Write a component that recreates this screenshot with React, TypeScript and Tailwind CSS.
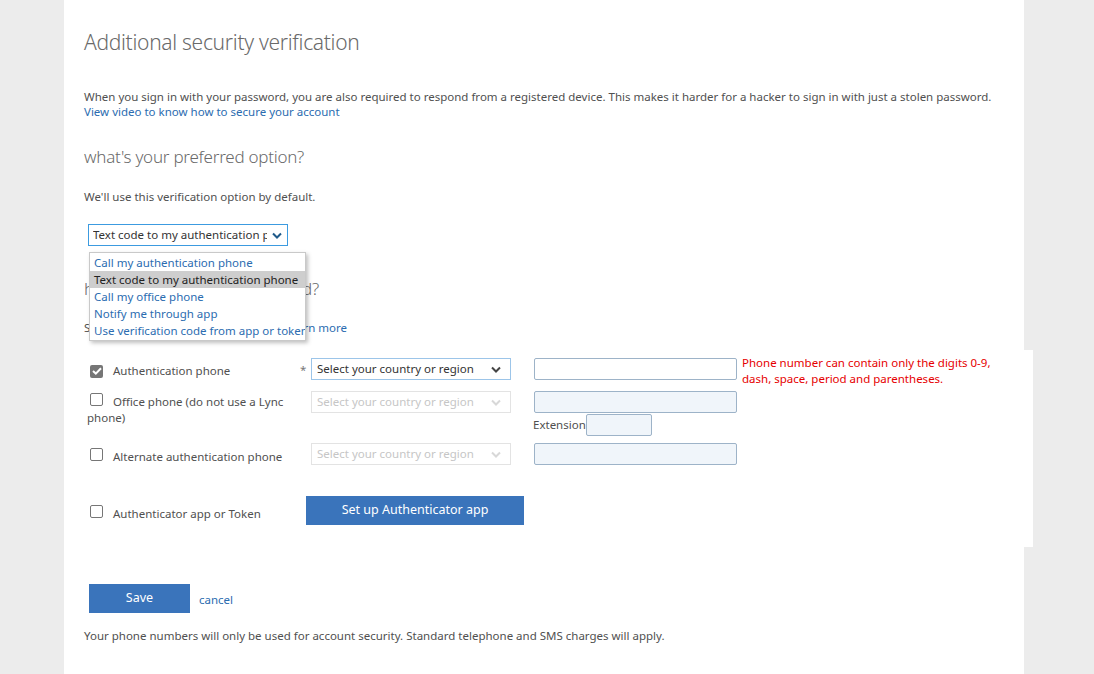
import React from 'react';

const Chevron = ({ className }: { className: string }) => (
  <svg width="10" height="7" viewBox="0 0 10 7" className={className}>
    <polyline points="1,1.5 5,5.5 9,1.5" fill="none" stroke="currentColor" strokeWidth="2" />
  </svg>
);

function CheckBox({ checked }: { checked?: boolean }) {
  if (checked) {
    return (
      <span className="inline-flex h-[13px] w-[13px] items-center justify-center rounded-[2px] bg-[#767676] align-[0px]">
        <svg width="10" height="8" viewBox="0 0 10 8">
          <polyline points="1,4 3.8,6.6 9,1.2" fill="none" stroke="white" strokeWidth="2" />
        </svg>
      </span>
    );
  }
  return (
    <span className="inline-block h-[13px] w-[13px] rounded-[2px] border border-[#767676] bg-white align-[0px]" />
  );
}

function CountrySelect({ disabled }: { disabled?: boolean }) {
  return (
    <div
      className={`flex h-[22px] w-[200px] items-center justify-between border pr-[9px] pl-[5px] ${
        disabled ? 'border-[#e3e3e3] text-[#c6c6c6]' : 'border-[#9cc5e9] text-[#333]'
      }`}
    >
      <span>Select your country or region</span>
      <Chevron className={disabled ? 'text-[#d8d8d8]' : 'text-[#444]'} />
    </div>
  );
}

function PhoneInput({ disabled, width = 'w-[203px]' }: { disabled?: boolean; width?: string }) {
  return (
    <div
      className={`h-[22px] ${width} rounded-[2px] border border-[#9db3c8] ${
        disabled ? 'bg-[#f0f5fa]' : 'bg-white'
      }`}
    />
  );
}

const options = [
  'Call my authentication phone',
  'Text code to my authentication phone',
  'Call my office phone',
  'Notify me through app',
  'Use verification code from app or token',
];

export default function App() {
  return (
    <div className="min-h-screen bg-[#ececec] font-['Noto_Sans',sans-serif] text-[11.5px] text-[#505050]">
      <div className="relative ml-[64px] min-h-[674px] w-[960px] bg-white px-5 pt-[27px]">
        <h1 className="text-[21px] leading-[30px] font-light tracking-[-0.3px] text-[#6a6a6a]">
          Additional security verification
        </h1>

        <p className="mt-[32px] leading-[15px]">
          When you sign in with your password, you are also required to respond from a registered device. This
          makes it harder for a hacker to sign in with just a stolen password.
          <br />
          <a className="text-[#2b6cb0]">View video to know how to secure your account</a>
        </p>

        <h2 className="mt-[26px] text-[17px] leading-[24px] font-light tracking-[-0.25px] text-[#6a6a6a]">
          what's your preferred option?
        </h2>
        <p className="mt-[20px] leading-[15px]">We'll use this verification option by default.</p>

        <div className="mt-[20px] ml-1 flex h-[22px] w-[200px] items-center justify-between border border-[#3c9be0] pr-[5px] pl-[4px] text-[#333]">
          <span className="w-[174px] overflow-hidden whitespace-nowrap">Text code to my authentication phone</span>
          <Chevron className="shrink-0 text-[#1f5a8a]" />
        </div>

        {/* open dropdown list */}
        <div className="absolute top-[252px] left-[25px] z-10 w-[217px] border border-[#c9c9c9] bg-white py-px shadow-[2px_2px_4px_rgba(0,0,0,0.25)]">
          {options.map((o, i) => (
            <div
              key={o}
              className={`h-[17px] overflow-hidden pl-[4px] leading-[17px] whitespace-nowrap ${
                i === 1 ? 'bg-[#cecece] text-[#222]' : 'text-[#2b6cb0]'
              }`}
            >
              {o}
            </div>
          ))}
        </div>

        <h2 className="mt-[31px] text-[17px] leading-[24px] font-light tracking-[-0.25px] text-[#6a6a6a]">
          how would you like to respond?
        </h2>
        <p className="mt-[19px] leading-[15px]">
          Set up one or more of these options. <a className="text-[#2b6cb0]">Learn more</a>
        </p>

        <div className="mt-[15px] w-[949px] bg-white pt-[8px] pb-[22px]">
          {/* row 1 */}
          <div className="flex items-start">
            <div className="w-[216px] pt-[5px] pl-[3px] leading-[16px]">
              <span className="mr-[10px] ml-[3px]">
                <CheckBox checked />
              </span>
              Authentication phone
            </div>
            <div className="w-[11px] pt-[3px] text-[#777]">*</div>
            <CountrySelect />
            <div className="ml-[23px]">
              <PhoneInput />
            </div>
            <div className="-mt-[3px] ml-[5px] leading-[16px] text-[#e60000]">
              Phone number can contain only the digits 0-9,
              <br />
              dash, space, period and parentheses.
            </div>
          </div>

          {/* row 2 */}
          <div className="mt-[4px] flex items-start">
            <div className="w-[227px] pt-[2px] pl-[3px] leading-[16px]">
              <span className="mr-[10px] ml-[3px]">
                <CheckBox />
              </span>
              Office phone (do not use a Lync
              <br />
              phone)
            </div>
            <CountrySelect disabled />
            <div className="ml-[23px]">
              <PhoneInput disabled />
              <div className="mt-px flex items-center">
                <span className="-ml-px">Extension</span>
                <PhoneInput disabled width="w-[66px]" />
              </div>
            </div>
          </div>

          {/* row 3 */}
          <div className="mt-[7px] flex items-start">
            <div className="w-[227px] pt-[5px] pl-[3px] leading-[16px]">
              <span className="mr-[10px] ml-[3px]">
                <CheckBox />
              </span>
              Alternate authentication phone
            </div>
            <CountrySelect disabled />
            <div className="ml-[23px]">
              <PhoneInput disabled />
            </div>
          </div>

          {/* row 4 */}
          <div className="mt-[31px] flex items-start">
            <div className="w-[222px] pt-[9px] pl-[3px] leading-[16px]">
              <span className="mr-[10px] ml-[3px]">
                <CheckBox />
              </span>
              Authenticator app or Token
            </div>
            <button className="h-[29px] w-[218px] bg-[#3a74bb] text-[12.5px] text-white">
              Set up Authenticator app
            </button>
          </div>
        </div>

        <div className="mt-[37px] ml-[5px] flex items-center">
          <button className="h-[29px] w-[101px] bg-[#3a74bb] text-[12.5px] text-white">Save</button>
          <a className="ml-[9px] pt-[2px] text-[#2b6cb0]">cancel</a>
        </div>

        <p className="mt-[15px] leading-[15px]">
          Your phone numbers will only be used for account security. Standard telephone and SMS charges will apply.
        </p>
      </div>
    </div>
  );
}
